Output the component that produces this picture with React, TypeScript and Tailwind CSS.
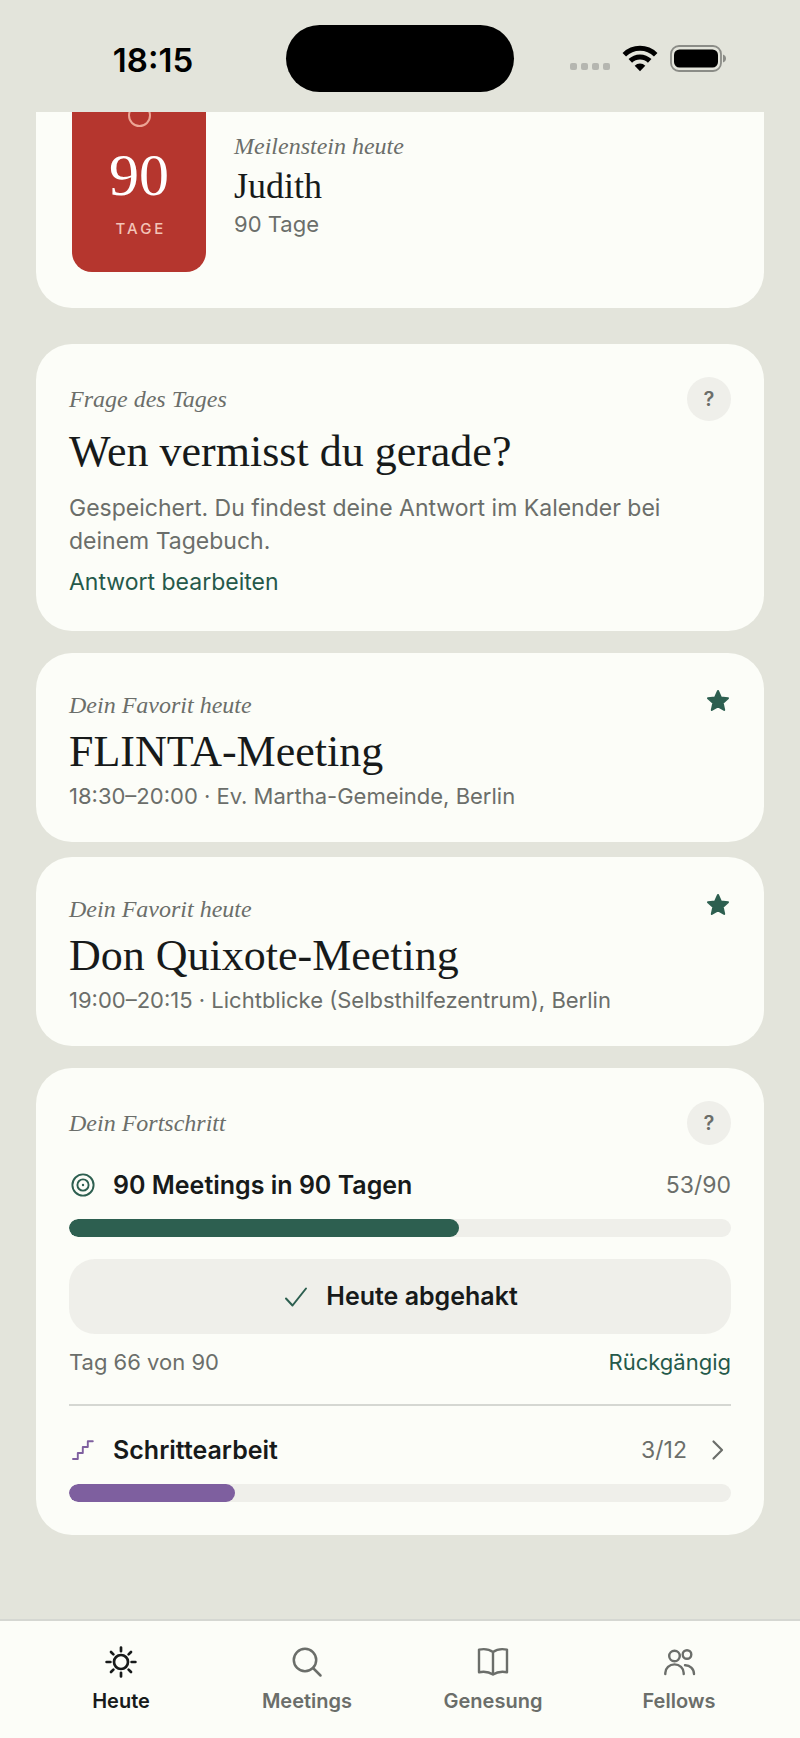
import type { ReactNode } from "react";

const favorites = [
  { name: "FLINTA-Meeting", info: "18:30–20:00 · Ev. Martha-Gemeinde, Berlin" },
  { name: "Don Quixote-Meeting", info: "19:00–20:15 · Lichtblicke (Selbsthilfezentrum), Berlin" },
];

const navItems = [
  { label: "Heute", icon: <SunIcon />, active: true },
  { label: "Meetings", icon: <SearchIcon />, active: false },
  { label: "Genesung", icon: <BookIcon />, active: false },
  { label: "Fellows", icon: <PeopleIcon />, active: false },
];

function SunIcon() {
  return (
    <svg viewBox="0 0 34 34" className="size-[34px]" fill="none" stroke="currentColor" strokeWidth="2.7" strokeLinecap="round">
      <circle cx="17" cy="17" r="7" />
      <path d="M17 2.6v3.6M17 27.800v3.600M2.600 17h3.800M27.600 17h3.800M7 7l2.400 2.400M24.600 24.600l2.400 2.400M7 27l2.400-2.400M24.600 9.400L27 7" />
    </svg>
  );
}

function SearchIcon() {
  return (
    <svg viewBox="0 0 34 34" className="size-[34px]" fill="none" stroke="currentColor" strokeWidth="2.5" strokeLinecap="round">
      <circle cx="15" cy="15" r="11.2" />
      <path d="M23 23l7.500 7.500" />
    </svg>
  );
}

function BookIcon() {
  return (
    <svg viewBox="0 0 34 34" className="size-[34px]" fill="none" stroke="currentColor" strokeWidth="2.4" strokeLinejoin="round" strokeLinecap="round">
      <path d="M17 7C13 4 8 3.600 3 4.600v22.600c5-1 10-.4 14 2.400c4-2.800 9-3.400 14-2.400V4.600C26 3.600 21 4 17 7zM17 7v22" />
    </svg>
  );
}

function PeopleIcon() {
  return (
    <svg viewBox="0 0 34 34" className="size-[34px]" fill="none" stroke="currentColor" strokeWidth="2.4" strokeLinecap="round">
      <circle cx="12.500" cy="11" r="5.300" />
      <circle cx="25" cy="9.500" r="4.300" />
      <path d="M3.300 29v-1a9.200 8.600 0 0 1 18.400 0v1M23 20.200c4.800-.2 9 3.600 9 8.800" />
    </svg>
  );
}

function StarIcon() {
  return (
    <svg viewBox="0 0 24 24" className="size-6 shrink-0" fill="#2d5f50" stroke="#2d5f50" strokeWidth="2" strokeLinejoin="round">
      <path d="M12 2l2.900 6.500 7.100.7-5.300 4.700 1.500 7-6.200-3.600-6.200 3.600 1.500-7L2 9.200l7.100-.7z" />
    </svg>
  );
}

function TargetIcon() {
  return (
    <svg viewBox="0 0 28 28" className="size-7 text-[#2d5f50]" fill="none" stroke="currentColor" strokeWidth="1.9">
      <circle cx="14" cy="14" r="10.600" />
      <circle cx="14" cy="14" r="5.600" />
      <circle cx="14" cy="14" r="1.200" fill="currentColor" stroke="none" />
    </svg>
  );
}

function StepsIcon() {
  return (
    <svg viewBox="0 0 28 28" className="size-7 text-[#7e5f9f]" fill="none" stroke="currentColor" strokeWidth="1.9" strokeLinecap="round" strokeLinejoin="round">
      <path d="M4 23h4.800v-6h5v-6h5V5.200h5" />
    </svg>
  );
}

function StatusBar() {
  return (
    <header className="relative z-10 grid h-28 shrink-0 grid-cols-[1fr_228px_1fr] items-center bg-[#e3e4db]">
      <p className="pt-2 pl-5 text-center text-[33px] leading-10 font-semibold text-black">18:15</p>
      <div className="mt-1 h-[67px] rounded-full bg-black" />
      <div className="flex items-center justify-end gap-3 pt-1 pr-[72px]">
        <div className="flex gap-1 pt-4">
          {[0, 1, 2, 3].map((dot) => (
            <span key={dot} className="size-[7px] rounded-[2px] bg-[#b5b6b0]" />
          ))}
        </div>
        <svg viewBox="0 0 36 28" className="h-7 w-9" fill="none" stroke="black" strokeWidth="5">
          <path d="M2.300 10.700a22.500 22.500 0 0 1 31.400 0" />
          <path d="M8.300 16.900a13.800 13.800 0 0 1 19.400 0" />
          <path d="M18 27.200l-5.300-5.500a7.500 7.500 0 0 1 10.600 0z" fill="black" stroke="none" />
        </svg>
        <svg viewBox="0 0 58 28" className="h-7 w-[58px]">
          <rect x="1" y="2" width="50" height="25" rx="8" fill="none" stroke="#8b8c87" strokeWidth="1.800" />
          <rect x="4" y="5.500" width="44" height="18" rx="5.500" fill="black" />
          <path d="M53 10.500c4 1.300 4 6.700 0 8z" fill="#8b8c87" />
        </svg>
      </div>
    </header>
  );
}

function Card({ children, className = "" }: { children: ReactNode; className?: string }) {
  return <section className={`rounded-[36px] bg-[#fcfdf8] ${className}`}>{children}</section>;
}

function Eyebrow({ children }: { children: ReactNode }) {
  return (
    <p className="font-['Liberation_Serif',serif] text-2xl leading-8 text-[#6b6e6a] italic">{children}</p>
  );
}

function Title({ children }: { children: ReactNode }) {
  return (
    <h2 className="mt-[5px] font-['Liberation_Serif',serif] text-[44px] leading-[52px] text-[#171a1a]">{children}</h2>
  );
}

function HelpButton() {
  return (
    <button type="button" aria-label="Hilfe" className="size-11 rounded-full bg-[#efefea] text-[20px] font-semibold text-[#6b6e6a]">
      ?
    </button>
  );
}

function ProgressBar({ value, max, color }: { value: number; max: number; color: string }) {
  return (
    <div className="mt-[18px] h-[18px] overflow-hidden rounded-full bg-[#efefea]">
      <div className={`h-full rounded-full ${color}`} style={{ width: `${(value / max) * 100}%` }} />
    </div>
  );
}

export default function App() {
  return (
    <div className="flex min-h-screen flex-col bg-[#e3e4db] font-[Inter,sans-serif] text-[#171a1a]">
      <StatusBar />

      <main className="flex-1 overflow-hidden px-9">
        {/* Milestone, scrolled partly under the status bar */}
        <Card className="-mt-15 flex items-center gap-7 p-9">
          <div className="flex h-46 w-[134px] flex-col items-center rounded-[20px] bg-[#b5362e] pt-4">
            <span className="size-[23px] rounded-full border-2 border-[#eda595]" />
            <span className="mt-[18px] font-['Liberation_Serif',serif] text-[60px] leading-[60px] text-white">90</span>
            <span className="mt-[14px] pl-1 text-[15px] leading-5 font-medium tracking-[0.2em] text-[#f3c4b8]">TAGE</span>
          </div>
          <div className="pt-2">
            <Eyebrow>Meilenstein heute</Eyebrow>
            <h2 className="mt-1 font-['Liberation_Serif',serif] text-[36px] leading-10 text-[#171a1a]">Judith</h2>
            <p className="mt-1 text-[22px] leading-7 text-[#6b6e6a]">90 Tage</p>
          </div>
        </Card>

        {/* Question of the day */}
        <Card className="mt-9 px-[33px] pt-[33px] pb-8">
          <div className="flex items-center justify-between">
            <Eyebrow>Frage des Tages</Eyebrow>
            <HelpButton />
          </div>
          <Title>Wen vermisst du gerade?</Title>
          <p className="mt-[14px] text-[23px] leading-[33px] text-[#6b6e6a]">
            Gespeichert. Du findest deine Antwort im Kalender bei deinem Tagebuch.
          </p>
          <a href="#antwort" className="mt-2 block w-fit text-[23px] leading-[33px] text-[#25594a]">
            Antwort bearbeiten
          </a>
        </Card>

        {/* Favourite meetings */}
        <div className="mt-[22px] flex flex-col gap-[15px]">
          {favorites.map((meeting) => (
            <Card key={meeting.name} className="flex justify-between pt-9 pr-[34px] pb-8 pl-[33px]">
              <div>
                <Eyebrow>Dein Favorit heute</Eyebrow>
                <Title>{meeting.name}</Title>
                <p className="mt-1 text-[22px] leading-7 text-[#6b6e6a]">{meeting.info}</p>
              </div>
              <StarIcon />
            </Card>
          ))}
        </div>

        {/* Progress */}
        <Card className="mt-[22px] px-[33px] py-[33px]">
          <div className="flex items-center justify-between">
            <Eyebrow>Dein Fortschritt</Eyebrow>
            <HelpButton />
          </div>

          <div className="mt-6 flex items-center gap-4">
            <TargetIcon />
            <h3 className="flex-1 text-[25px] leading-8 font-semibold">90 Meetings in 90 Tagen</h3>
            <span className="text-[23px] leading-8 text-[#6b6e6a]">53/90</span>
          </div>
          <ProgressBar value={53} max={90} color="bg-[#2d5f50]" />
          <button type="button" className="mt-[22px] flex h-[75px] w-full items-center justify-center gap-4 rounded-[26px] bg-[#efefea] text-[25px] font-semibold">
            <svg viewBox="0 0 28 28" className="size-7" fill="none" stroke="#2d5f50" strokeWidth="2" strokeLinecap="round" strokeLinejoin="round">
              <path d="M4 15.500l6.500 7L24 5.500" />
            </svg>
            Heute abgehakt
          </button>
          <div className="mt-[14px] flex justify-between text-[22px] leading-7">
            <p className="text-[#6b6e6a]">Tag 66 von 90</p>
            <button type="button" className="text-[#25594a]">Rückgängig</button>
          </div>

          <a href="#schritte" className="mt-7 block border-t-2 border-[#d5d7d2] pt-7">
            <div className="flex items-center gap-4">
              <StepsIcon />
              <h3 className="flex-1 text-[25px] leading-8 font-semibold">Schrittearbeit</h3>
              <span className="text-[23px] leading-8 text-[#6b6e6a]">3/12</span>
              <svg viewBox="0 0 28 28" className="size-7" fill="none" stroke="#6b6e6a" strokeWidth="2.200" strokeLinecap="round" strokeLinejoin="round">
                <path d="M10.500 5.500l8.500 8.500-8.500 8.500" />
              </svg>
            </div>
            <ProgressBar value={3} max={12} color="bg-[#7e5f9f]" />
          </a>
        </Card>
      </main>

      {/* Bottom tabs */}
      <nav className="flex h-[119px] shrink-0 border-t-2 border-[#d5d7d2] bg-[#fcfdf8] px-7 pt-6">
        {navItems.map((item) => (
          <a
            key={item.label}
            href={`#${item.label.toLowerCase()}`}
            className={`flex flex-1 flex-col items-center gap-2 text-[20px] leading-7 font-semibold ${
              item.active ? "text-[#171a1a]" : "text-[#6b6e6a]"
            }`}
          >
            {item.icon}
            {item.label}
          </a>
        ))}
      </nav>
    </div>
  );
}
